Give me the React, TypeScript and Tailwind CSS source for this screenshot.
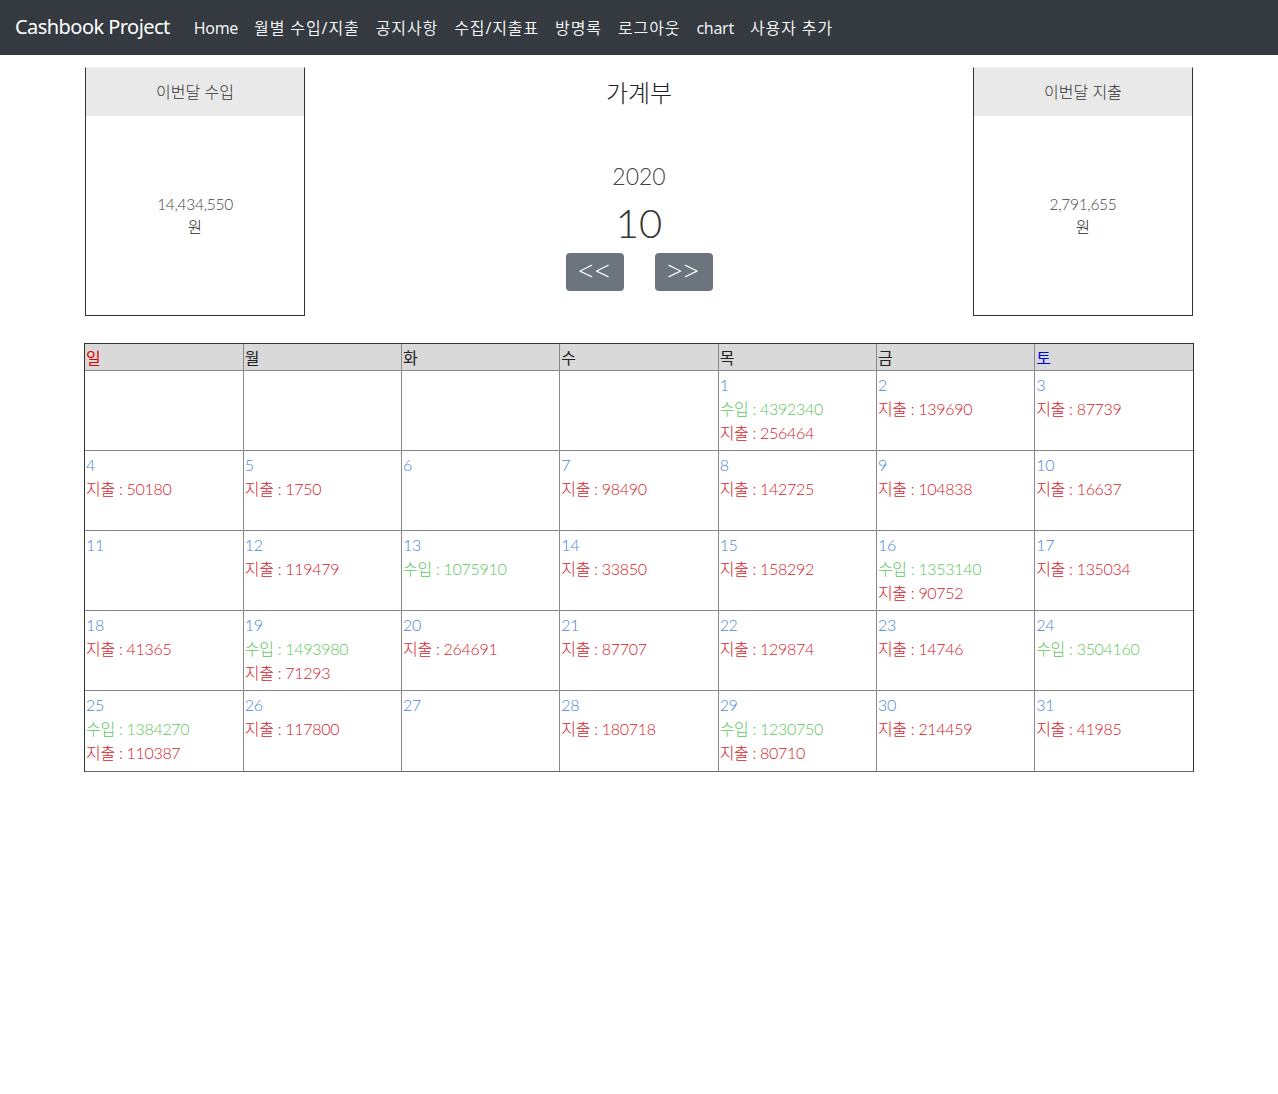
import React from "react";

type Day = { d: number; inc?: number; exp?: number } | null;

const days: Day[] = [
  null, null, null, null,
  { d: 1, inc: 4392340, exp: 256464 },
  { d: 2, exp: 139690 },
  { d: 3, exp: 87739 },
  { d: 4, exp: 50180 },
  { d: 5, exp: 1750 },
  { d: 6 },
  { d: 7, exp: 98490 },
  { d: 8, exp: 142725 },
  { d: 9, exp: 104838 },
  { d: 10, exp: 16637 },
  { d: 11 },
  { d: 12, exp: 119479 },
  { d: 13, inc: 1075910 },
  { d: 14, exp: 33850 },
  { d: 15, exp: 158292 },
  { d: 16, inc: 1353140, exp: 90752 },
  { d: 17, exp: 135034 },
  { d: 18, exp: 41365 },
  { d: 19, inc: 1493980, exp: 71293 },
  { d: 20, exp: 264691 },
  { d: 21, exp: 87707 },
  { d: 22, exp: 129874 },
  { d: 23, exp: 14746 },
  { d: 24, inc: 3504160 },
  { d: 25, inc: 1384270, exp: 110387 },
  { d: 26, exp: 117800 },
  { d: 27 },
  { d: 28, exp: 180718 },
  { d: 29, inc: 1230750, exp: 80710 },
  { d: 30, exp: 214459 },
  { d: 31, exp: 41985 },
];

const weeks: Day[][] = [];
for (let i = 0; i < days.length; i += 7) weeks.push(days.slice(i, i + 7));

const navItems: { t: string; ko: boolean }[] = [
  { t: "Home", ko: false },
  { t: "월별 수입/지출", ko: true },
  { t: "공지사항", ko: true },
  { t: "수집/지출표", ko: true },
  { t: "방명록", ko: true },
  { t: "로그아웃", ko: true },
  { t: "chart", ko: false },
  { t: "사용자 추가", ko: true },
];
const heads = ["일", "월", "화", "수", "목", "금", "토"];

const light = "font-['Lato','Noto_Sans_CJK_KR',sans-serif] font-light";

function SummaryBox({ title, amount }: { title: string; amount: string }) {
  return (
    <div className="w-[220px] flex flex-col">
      <div className={`h-[49px] bg-[#e9e9e9] border-t border-[#f2f2f2] border-x border-x-[#333] flex items-center justify-center text-[16px] text-[#333] ${light}`}>
        {title}
      </div>
      <div className={`h-[200px] border-x border-b border-[#333] flex flex-col items-center justify-center text-[15.5px] leading-[23px] text-[#444] ${light}`}>
        <div className="tracking-[-0.3px]">{amount}</div>
        <div className="text-[#222]">원</div>
      </div>
    </div>
  );
}

export default function App() {
  return (
    <div className="min-h-[1094px] bg-white font-['Noto_Sans','Noto_Sans_CJK_KR',sans-serif]">
      <nav className="h-[55px] bg-[#343a40] flex items-center px-[15px]">
        <span className="text-white text-[20px] mr-[16px] mb-[1px] tracking-[-0.55px]">Cashbook Project</span>
        <div className="flex">
          {navItems.map((n) => (
            <span
              key={n.t}
              className={`px-[8px] text-white/95 ${n.ko ? "text-[16px] tracking-[0.9px]" : "text-[16px] tracking-[-0.3px]"}`}
            >
              {n.t}
            </span>
          ))}
        </div>
      </nav>

      <div className="w-[1110px] mx-auto">
        <div className="mt-[12px] flex justify-between pl-[1px] pr-[1px]">
          <SummaryBox title="이번달 수입" amount="14,434,550" />
          <div className="flex flex-col items-center">
            <div className="h-[49px] flex items-center text-[24px] text-[#222] font-['Noto_Sans_CJK_KR',sans-serif] font-light">가계부</div>
            <div className={`mt-[44px] text-[23px] leading-[33px] text-[#444] ${light}`}>2020</div>
            <div className={`mt-[7px] text-[40px] leading-[46px] text-[#333] ${light}`}>10</div>
            <div className="mt-[7px] flex gap-[31px]">
              <button className="w-[58px] h-[38px] rounded-[4px] bg-[#6c757d] text-white text-[27px] leading-none font-['Open_Sans',sans-serif] font-light pb-[3px] tracking-[1px]">&lt;&lt;</button>
              <button className="w-[58px] h-[38px] rounded-[4px] bg-[#6c757d] text-white text-[27px] leading-none font-['Open_Sans',sans-serif] font-light pb-[3px] tracking-[1px]">&gt;&gt;</button>
            </div>
          </div>
          <SummaryBox title="이번달 지출" amount="2,791,655" />
        </div>

        <div className="mt-[27px] border border-[#333] border-b-[#666]">
          <table className="w-full table-fixed border-collapse">
            <thead>
              <tr className="h-[26px] bg-[#d9d9d9]">
                {heads.map((h, i) => (
                  <th
                    key={h}
                    className={`text-left font-normal text-[16px] leading-[26px] align-middle p-0 pl-[1px] border-b border-[#888] ${i < 6 ? "border-r border-r-[#888]" : ""} ${i === 0 ? "text-[#e00000]" : i === 6 ? "text-[#0000e0]" : "text-[#222]"} font-['Noto_Sans_CJK_KR',sans-serif]`}
                  >
                    {h}
                  </th>
                ))}
              </tr>
            </thead>
            <tbody>
              {weeks.map((w, wi) => (
                <tr key={wi} className="h-[80px]">
                  {w.map((c, ci) => (
                    <td
                      key={ci}
                      className={`align-top p-0 pl-[1px] pt-[2px] text-[16px] leading-[24px] ${light} ${ci < 6 ? "border-r border-[#888]" : ""} ${wi < weeks.length - 1 ? "border-b border-[#888]" : ""}`}
                    >
                      {c && (
                        <div className="tracking-[-0.3px]">
                          <div className="text-[#4a86d8]">{c.d}</div>
                          {c.inc !== undefined && <div className="text-[#5cc85c]">수입 : {c.inc}</div>}
                          {c.exp !== undefined && <div className="text-[#d41a2a]">지출 : {c.exp}</div>}
                        </div>
                      )}
                    </td>
                  ))}
                </tr>
              ))}
            </tbody>
          </table>
        </div>
      </div>
    </div>
  );
}
